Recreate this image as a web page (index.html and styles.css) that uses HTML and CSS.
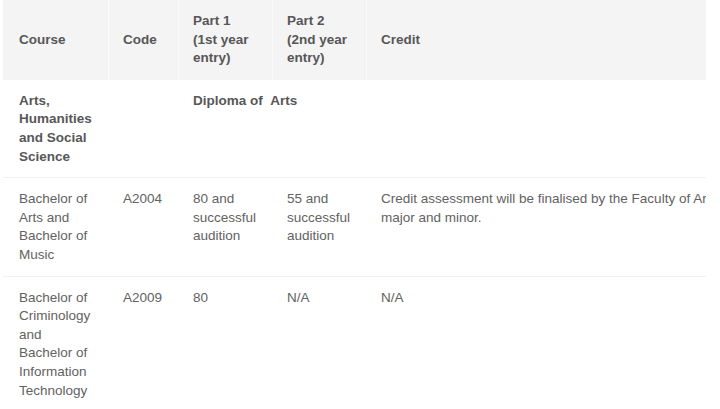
FILE: index.html
```html
<!DOCTYPE html>
<html lang="en">
<head>
<meta charset="utf-8">
<title>Course entry requirements</title>
<link rel="stylesheet" href="styles.css">
</head>
<body>
<div class="wrap">
  <table class="courses">
    <colgroup>
      <col class="c-course">
      <col class="c-code">
      <col class="c-part1">
      <col class="c-part2">
      <col class="c-credit">
    </colgroup>
    <thead>
      <tr>
        <th class="first">Course</th>
        <th>Code</th>
        <th>Part 1 (1st year entry)</th>
        <th>Part 2 (2nd year entry)</th>
        <th>Credit</th>
      </tr>
    </thead>
    <tbody>
      <tr class="group">
        <td class="first"><strong>Arts, Humanities and Social Science</strong></td>
        <td></td>
        <td colspan="3"><strong>Diploma of &nbsp;Arts</strong></td>
      </tr>
      <tr>
        <td class="first">Bachelor of Arts and Bachelor of Music</td>
        <td>A2004</td>
        <td>80 and successful audition</td>
        <td>55 and successful audition</td>
        <td>Credit assessment will be finalised by the Faculty of Arts, based on your chosen major and minor.</td>
      </tr>
      <tr>
        <td class="first">Bachelor of Criminology and Bachelor of Information Technology</td>
        <td>A2009</td>
        <td>80</td>
        <td>N/A</td>
        <td>N/A</td>
      </tr>
    </tbody>
  </table>
</div>
</body>
</html>
```
FILE: styles.css
```css
html, body {
  margin: 0;
  padding: 0;
  background: #ffffff;
}

body {
  font-family: "Liberation Sans", Arial, Helvetica, sans-serif;
  font-size: 13.5px;
  line-height: 18.6px;
  color: #626262;
}

.wrap {
  margin-left: 3px;
  width: 703px;
  overflow: hidden;
}

.courses {
  border-collapse: separate;
  border-spacing: 0;
  table-layout: fixed;
  width: 873px;
}

.c-course { width: 105px; }
.c-code { width: 70px; }
.c-part1 { width: 94px; }
.c-part2 { width: 94px; }
.c-credit { width: 510px; }

.courses th,
.courses td {
  text-align: left;
  vertical-align: top;
  padding: 12px 16px 12px 14px;
}

.courses th {
  background: #f4f4f4;
  font-weight: bold;
  color: #575757;
  vertical-align: middle;
  border-left: 1px solid #fbfbfb;
}

.courses th.first,
.courses td.first {
  border-left: 0;
  padding-left: 16px;
}

.courses td {
  border-bottom: 1px solid #f1f1f1;
  padding-bottom: 11px;
}

.courses td + td {
  padding-left: 15px;
}

.courses strong {
  font-weight: bold;
  color: #575757;
}
```
